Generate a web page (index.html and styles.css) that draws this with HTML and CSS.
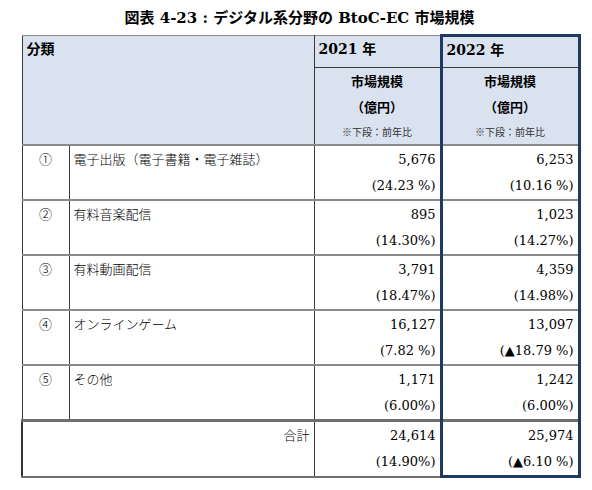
FILE: index.html
```html
<!DOCTYPE html>
<html lang="ja">
<head>
    <meta charset="UTF-8">
    <meta name="viewport" content="width=device-width, initial-scale=1.0">
    <title>デジタル系分野の BtoC-EC 市場規模</title>
    <link rel="stylesheet" href="styles.css">
</head>
<body>
    <div class="page">
        <h1 class="title">図表 4-23 : デジタル系分野の BtoC-EC 市場規模</h1>

        <table class="market">
            <colgroup>
                <col class="col-no">
                <col class="col-name">
                <col class="col-2021">
                <col class="col-2022">
            </colgroup>
            <thead>
                <tr class="year-row">
                    <th class="cat-head" colspan="2" rowspan="2">分類</th>
                    <th class="year">2021 年</th>
                    <th class="year y22">2022 年</th>
                </tr>
                <tr class="unit-row">
                    <th class="unit">市場規模<br>（億円）<span class="note">※下段：前年比</span></th>
                    <th class="unit y22">市場規模<br>（億円）<span class="note">※下段：前年比</span></th>
                </tr>
            </thead>
            <tbody>
                <tr>
                    <td class="no">①</td>
                    <td class="name">電子出版（電子書籍・電子雑誌）</td>
                    <td class="num">5,676<br>(24.23 %)</td>
                    <td class="num y22">6,253<br>(10.16 %)</td>
                </tr>
                <tr>
                    <td class="no">②</td>
                    <td class="name">有料音楽配信</td>
                    <td class="num">895<br>(14.30%)</td>
                    <td class="num y22">1,023<br>(14.27%)</td>
                </tr>
                <tr>
                    <td class="no">③</td>
                    <td class="name">有料動画配信</td>
                    <td class="num">3,791<br>(18.47%)</td>
                    <td class="num y22">4,359<br>(14.98%)</td>
                </tr>
                <tr>
                    <td class="no">④</td>
                    <td class="name">オンラインゲーム</td>
                    <td class="num">16,127<br>(7.82 %)</td>
                    <td class="num y22">13,097<br>(▲18.79 %)</td>
                </tr>
                <tr>
                    <td class="no">⑤</td>
                    <td class="name">その他</td>
                    <td class="num">1,171<br>(6.00%)</td>
                    <td class="num y22">1,242<br>(6.00%)</td>
                </tr>
                <tr class="total">
                    <td class="total-label" colspan="2">合計</td>
                    <td class="num">24,614<br>(14.90%)</td>
                    <td class="num y22">25,974<br>(▲6.10 %)</td>
                </tr>
            </tbody>
        </table>
    </div>
</body>
</html>
```

FILE: styles.css
```css
body {
    margin: 0;
    background-color: #fff;
    color: #000;
    font-family: "DejaVu Serif", "Noto Sans CJK JP", serif;
    font-size: 13px;
}
.page {
    padding: 6px 0 0 21px;
    width: 557px;
}
.title {
    margin: 0 0 4px;
    font-size: 15px;
    line-height: 24px;
    text-align: center;
    font-weight: bold;
}
.market {
    width: 557px;
    border-collapse: collapse;
    table-layout: fixed;
}
.col-no { width: 47px; }
.col-name { width: 245px; }
.col-2021 { width: 127px; }
.col-2022 { width: 138px; }

.market th,
.market td {
    border: 1px solid #3a3a3a;
    padding: 0 4px;
    vertical-align: top;
    line-height: 26px;
}
.market thead th {
    background-color: #dae2f0;
    border-top: 1px solid #8c8c8c;
}
.cat-head {
    text-align: left;
    font-weight: bold;
    padding-top: 3px;
    font-size: 14px;
    border-left: 2px solid #333;
}
.year-row {
    height: 32px;
}
.year {
    text-align: left;
    padding: 3px 3px 0;
    font-size: 14px;
}
.market .unit {
    text-align: center;
    padding-top: 1px;
    border-top: 1px solid #8c8c8c;
}
.note {
    display: block;
    font-size: 10px;
    line-height: 23px;
    font-weight: normal;
    color: #333;
}

.market tbody td {
    border-top: 2px solid #8a8a8a;
    padding-top: 1px;
    font-weight: 300;
}
.no {
    text-align: center;
    border-left: 2px solid #333;
    border-right: 2px solid #9a9a9a;
}
.name {
    padding-left: 4px;
}
.num {
    text-align: right;
}
.market .total td {
    border-top: 3px solid #6e6e6e;
    border-bottom: 2px solid #6e6e6e;
}
.market .total-label {
    text-align: right;
    border-left: 2px solid #333;
}

.market .y22 {
    border-left: 3px solid #1f3864;
    border-right: 3px solid #1f3864;
}
.market thead .year.y22 {
    border-top: 3px solid #1f3864;
}
.market .total .y22 {
    border-bottom: 3px solid #1f3864;
}
```
